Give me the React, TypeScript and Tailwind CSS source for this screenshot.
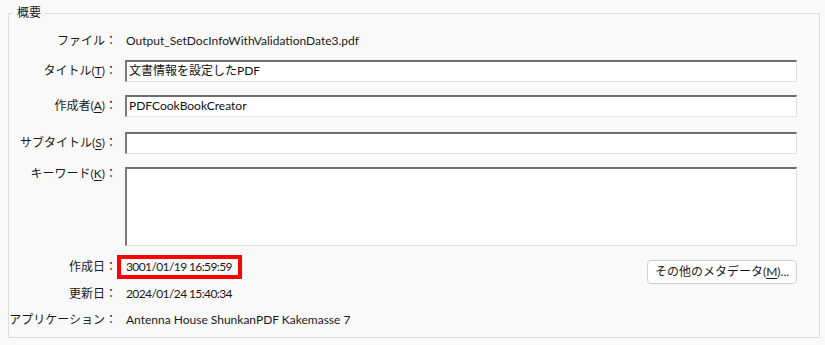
import React from "react";

const font = { fontFamily: 'Lato, "Noto Sans CJK JP", sans-serif' };

function Label({ children }: { children: React.ReactNode }) {
  return (
    <div className="w-[108px] shrink-0 text-right text-[12px] leading-[18px] text-[#1a1a1a] whitespace-nowrap">
      {children}
    </div>
  );
}

function Key({ k }: { k: string }) {
  return (
    <>
      (<span className="underline underline-offset-2">{k}</span>)
    </>
  );
}

function Field({ value, h = "h-[22px]" }: { value?: string; h?: string }) {
  return (
    <div
      className={`flex-1 ${h} bg-white border-t-2 border-l-2 border-t-[#6e6e6e] border-l-[#7a7a7a] border-r border-b border-r-[#e2e2e2] border-b-[#e2e2e2] px-[2px] text-[12px] leading-[18px] text-[#111]`}
    >
      {value}
    </div>
  );
}

export default function App() {
  return (
    <div
      className="w-[825px] h-[345px] bg-[#f9f9f9] pt-[4px] pl-[8px] pr-[5px] overflow-hidden"
      style={font}
    >
      <fieldset className="border border-[#dcdcdc] pr-[22px] pb-[8px]">
        <legend className="ml-[4px] px-[4px] text-[12px] leading-[18px] text-[#1a1a1a]">
          概要
        </legend>
        <div className="flex flex-col">
          <div className="flex items-center gap-[9px] mt-[10px]">
            <Label>ファイル：</Label>
            <div className="text-[12px] leading-[18px] text-[#1a1a1a]">
              Output_SetDocInfoWithValidationDate3.pdf
            </div>
          </div>
          <div className="flex items-center gap-[8px] mt-[10px]">
            <Label>
              タイトル<Key k="T" />：
            </Label>
            <Field value="文書情報を設定したPDF" />
          </div>
          <div className="flex items-center gap-[8px] mt-[13px]">
            <Label>
              作成者<Key k="A" />：
            </Label>
            <Field value="PDFCookBookCreator" />
          </div>
          <div className="flex items-center gap-[8px] mt-[15px]">
            <Label>
              サブタイトル<Key k="S" />：
            </Label>
            <Field />
          </div>
          <div className="flex items-start gap-[8px] mt-[13px]">
            <div className="mt-[-2px]">
              <Label>
                キーワード<Key k="K" />：
              </Label>
            </div>
            <Field h="h-[79px]" />
          </div>
          <div className="flex items-start mt-[9px]">
            <div className="flex items-center">
              <Label>作成日：</Label>
              <div className="w-[125px] border-4 border-[#ff0000] pl-[5px] h-[24px] flex items-center text-[12px] tracking-[-0.6px] leading-[16px] text-[#1a1a1a] whitespace-nowrap">
                3001/01/19 16:59:59
              </div>
            </div>
            <div className="flex-1" />
            <button className="mt-[5px] w-[150px] h-[24px] rounded-[4px] border border-[#cfcfcf] bg-[#fdfdfd] text-[12px] leading-[18px] text-[#1a1a1a]">
              その他のメタデータ<Key k="M" />...
            </button>
          </div>
          <div className="flex items-center gap-[9px] mt-[1px]">
            <Label>更新日：</Label>
            <div className="text-[12px] tracking-[-0.6px] leading-[18px] text-[#1a1a1a]">
              2024/01/24 15:40:34
            </div>
          </div>
          <div className="flex items-center gap-[9px] mt-[8px]">
            <Label>アプリケーション：</Label>
            <div className="text-[12px] leading-[18px] text-[#1a1a1a]">
              Antenna House ShunkanPDF Kakemasse 7
            </div>
          </div>
        </div>
      </fieldset>
    </div>
  );
}
